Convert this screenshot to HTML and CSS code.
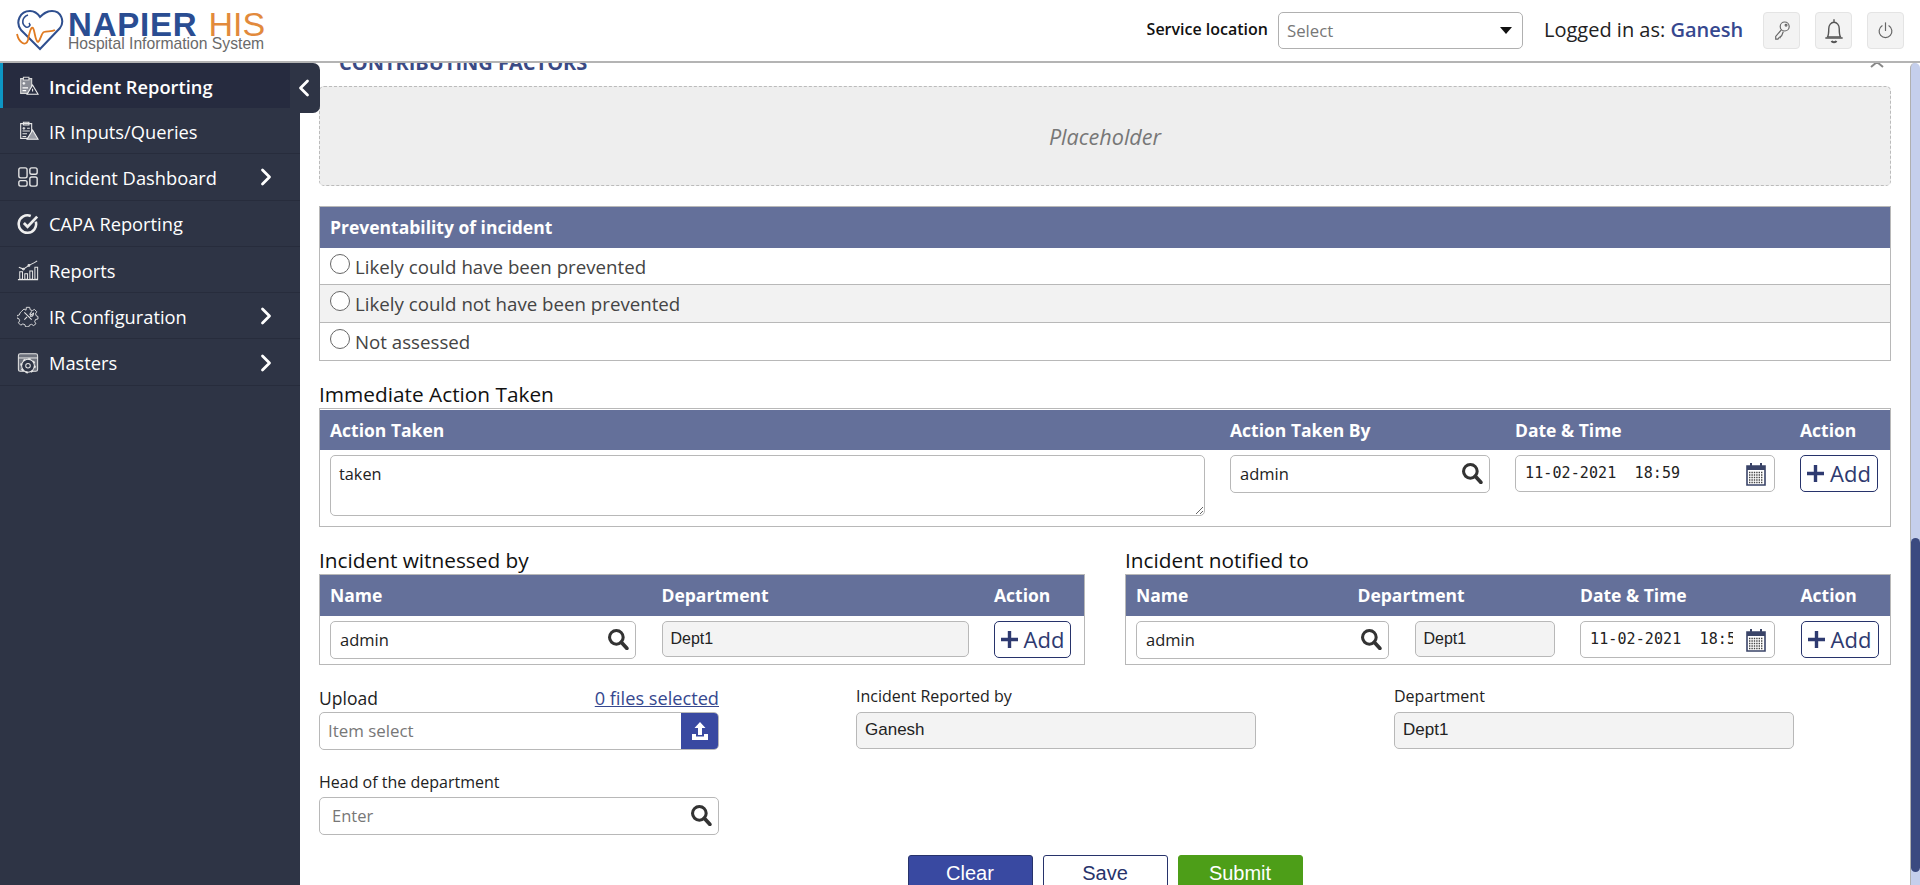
FILE: index.html
```html
<!DOCTYPE html>
<html lang="en">
<head>
    <meta charset="UTF-8">
    <meta name="viewport" content="width=device-width, initial-scale=1.0">
    <title>Napier HIS - Incident Reporting</title>
    <link rel="stylesheet" href="styles.css">
</head>
<body>

<svg class="icon-defs" width="0" height="0">
    <defs>
        <symbol id="i-search" viewBox="0 0 20 20">
            <circle cx="8.5" cy="8.5" r="6.2" fill="none" stroke="currentColor" stroke-width="2.8"/>
            <path d="M13 13l5 5.5" fill="none" stroke="currentColor" stroke-width="3.4" stroke-linecap="round"/>
        </symbol>
        <symbol id="i-plus" viewBox="0 0 18 18">
            <path d="M9 0v18M0 9h18" fill="none" stroke="currentColor" stroke-width="3.6"/>
        </symbol>
        <symbol id="i-cal" viewBox="0 0 20 24">
            <path d="M1 4h18v19H1z" fill="#fff" stroke="#3a4468" stroke-width="1.6"/>
            <path d="M1 4h18v4H1z" fill="#3a4468"/>
            <path d="M5 1v5M15 1v5" stroke="#3a4468" stroke-width="2"/>
            <path d="M3 10.5h14M3 13h14M3 15.5h14M3 18h14M3 20.5h14" stroke="#444" stroke-width="1.4" stroke-dasharray="1.4 1"/>
        </symbol>
        <symbol id="i-chev" viewBox="0 0 12 18">
            <path d="M2.5 2l7 7-7 7" fill="none" stroke="currentColor" stroke-width="2.8" stroke-linecap="round" stroke-linejoin="round"/>
        </symbol>
    </defs>
</svg>

<header class="topbar">
    <div class="logo">
        <svg class="logo-heart" viewBox="0 0 50 42" width="50" height="42">
            <path d="M24 40L5 21C-1 13 4 2 14 2c5 0 8 3 10 6 3-3 6-6 12-6 9 0 13 10 8 17L24 40z" fill="none" stroke="#2f4f8f" stroke-width="2"/>
            <path d="M12 6C6 8 5 15 10 18c3 1 5-2 3-4" fill="none" stroke="#2f4f8f" stroke-width="1.6"/>
            <path d="M1 25c2 9 9 13 11 6 1-6 3-14 5-12 2 3 2 13 5 14 3-2 3-9 6-10 4-1 8 0 11-2" fill="none" stroke="#e07b22" stroke-width="1.8"/>
        </svg>
        <div class="logo-text">
            <div class="logo-name"><b>NAPIER</b><span>HIS</span></div>
            <div class="logo-sub">Hospital Information System</div>
        </div>
    </div>
    <div class="top-right">
        <span class="service-label">Service location</span>
        <div class="select-box">
            <span>Select</span>
            <i class="caret"></i>
        </div>
        <span class="logged">Logged in as: <span class="user">Ganesh</span></span>
        <div class="icon-btns">
            <div class="icon-btn">
                <svg viewBox="0 0 20 24" width="18" height="22" fill="none" stroke="#666" stroke-width="1.3">
                    <circle cx="13" cy="7" r="5"/>
                    <circle cx="14.5" cy="5.5" r="1"/>
                    <path d="M9.5 10.5L3 18v3h2.5l1-1.5H8V18l1.5-.5 2-5"/>
                </svg>
            </div>
            <div class="icon-btn">
                <svg viewBox="0 0 20 24" width="24" height="28" fill="none" stroke="#555" stroke-width="1.2">
                    <path d="M10 2v2M4.5 17c1-2 1-4 1-7 0-3 2-5.500 4.500-5.500S14.500 7 14.500 10c0 3 0 5 1 7z"/>
                    <path d="M3 18h14" stroke-linecap="round"/>
                    <path d="M8 20.500c.5 1.500 3.500 1.500 4 0" stroke-width="1.800"/>
                </svg>
            </div>
            <div class="icon-btn">
                <svg viewBox="0 0 20 22" width="17" height="19" fill="none" stroke="#666" stroke-width="1.4" stroke-linecap="round">
                    <path d="M10 2v9"/>
                    <path d="M6 5.500a7.500 7.500 0 1 0 8 0"/>
                </svg>
            </div>
        </div>
    </div>
</header>

<div class="layout">
    <nav class="sidebar">
        <a class="nav-item active">
            <svg class="nav-icon" viewBox="0 0 24 24" fill="none" stroke="#d8d8d8" stroke-width="1.200">
                <path d="M4 4h12v16H4z" fill="#8a8d96"/>
                <path d="M7 2.500h6v3H7z" fill="#2a2f42"/>
                <path d="M6 9h3M7.500 7.500v3M6 14h6M6 17h4" stroke="#fff"/>
                <path d="M17 11l6 10H11z" fill="#2a2f42" stroke="#eee"/>
                <path d="M17 15v3" stroke="#eee"/>
            </svg>
            <span>Incident Reporting</span>
        </a>
        <a class="nav-item">
            <svg class="nav-icon" viewBox="0 0 24 24" fill="none" stroke="#e6e6e6" stroke-width="1.200">
                <path d="M4 4h12v16H4z"/>
                <path d="M7 2.500h6v3H7z"/>
                <path d="M6 9h3M7.500 7.500v3M11 9h3M6 12h8M6 15h5M6 18h4"/>
                <path d="M17 11l6 10H11z" fill="#9a9da6" stroke="#eee"/>
            </svg>
            <span>IR Inputs/Queries</span>
        </a>
        <a class="nav-item">
            <svg class="nav-icon" viewBox="0 0 24 24" fill="none" stroke="#e6e6e6" stroke-width="1.500">
                <rect x="2" y="2" width="9" height="11" rx="2"/>
                <rect x="14" y="2" width="8" height="7" rx="2"/>
                <rect x="2" y="16" width="9" height="6" rx="2"/>
                <rect x="14" y="12" width="8" height="10" rx="2"/>
            </svg>
            <span>Incident Dashboard</span>
            <svg class="nav-chev" width="12" height="18"><use href="#i-chev"/></svg>
        </a>
        <a class="nav-item">
            <svg class="nav-icon" viewBox="0 0 24 24" fill="none" stroke="#eee" stroke-width="2.800">
                <path d="M20.500 9.500A9.500 9.500 0 1 1 15 3.300"/>
                <path d="M7.500 11l4 4L22 4" stroke-width="3"/>
            </svg>
            <span>CAPA Reporting</span>
        </a>
        <a class="nav-item">
            <svg class="nav-icon" viewBox="0 0 24 24" fill="none" stroke="#e6e6e6" stroke-width="1.100">
                <path d="M1 22.500h22M3 22v-8h3v8zM8.500 22v-6h3v6zM14 22v-9h3v9zM19.500 22V9h3v13z"/>
                <path d="M2 9l5 2 6-4 6-3 3-2"/>
                <circle cx="7" cy="11" r="1"/>
                <circle cx="13" cy="7" r="1"/>
            </svg>
            <span>Reports</span>
        </a>
        <a class="nav-item">
            <svg class="nav-icon" viewBox="0 0 24 24" fill="none" stroke="#e6e6e6" stroke-width="1.100">
                <path d="M10 1.500h4l.7 3 2.600 1 2.500-1.500 2.800 2.800-1.500 2.500 1 2.600 2 .7v3l-3 .7-1 2.600 1.500 2.500-2.800 2.200-2.500-1.500-2.600 1-.7 2h-4l-.7-2.500-2.600-1-2.500 1.500-2.800-2.800 1.500-2.500-1-2.600-2.500-.7v-3l3-.7 1-2.600L4.300 6.300l2.800-2.800 2.500 1.500z" transform="translate(1.200 1.200) scale(.9)"/>
                <path d="M8 8l8 8M16 7l-2 3 1 1 3-2c0 3-2 4-4 3M8 16l3-3"/>
            </svg>
            <span>IR Configuration</span>
            <svg class="nav-chev" width="12" height="18"><use href="#i-chev"/></svg>
        </a>
        <a class="nav-item">
            <svg class="nav-icon" viewBox="0 0 24 24" fill="none" stroke="#e6e6e6" stroke-width="1.100">
                <rect x="1.500" y="2" width="21" height="19" rx="2" fill="#6d717c"/>
                <path d="M1.500 6.500h21" stroke="#e6e6e6"/>
                <circle cx="12" cy="15" r="7" fill="#2e3445"/>
                <circle cx="12" cy="15" r="7.500" stroke-width="2" stroke-dasharray="2.500 3.400"/>
                <circle cx="12" cy="15" r="2.500"/>
            </svg>
            <span>Masters</span>
            <svg class="nav-chev" width="12" height="18"><use href="#i-chev"/></svg>
        </a>
        <div class="nav-toggle">
            <svg width="12" height="18"><use href="#i-chev"/></svg>
        </div>
    </nav>

    <main class="content">
        <div class="section-title">
            <span>CONTRIBUTING FACTORS</span>
            <svg class="collapse" viewBox="0 0 14 8" width="14" height="8" fill="none" stroke="#888" stroke-width="2"><path d="M1 7l6-5 6 5"/></svg>
        </div>

        <div class="placeholder">Placeholder</div>

        <div class="tbl prevent">
            <div class="tbl-head single">Preventability of incident</div>
            <label class="radio-row"><input type="radio" name="prevent"><span>Likely could have been prevented</span></label>
            <label class="radio-row shade"><input type="radio" name="prevent"><span>Likely could not have been prevented</span></label>
            <label class="radio-row"><input type="radio" name="prevent"><span>Not assessed</span></label>
        </div>

        <h4 class="tbl-title first">Immediate Action Taken</h4>
        <div class="tbl">
            <div class="tbl-head cols-action gap-top">
                <span>Action Taken</span>
                <span>Action Taken By</span>
                <span>Date &amp; Time</span>
                <span>Action</span>
            </div>
            <div class="tbl-row cols-action tall">
                <textarea class="textarea">taken</textarea>
                <div class="field">
                    <input class="input" value="admin">
                    <svg class="field-icon"><use href="#i-search"/></svg>
                </div>
                <div class="field short">
                    <input class="input mono" value="11-02-2021  18:59">
                    <svg class="cal-icon"><use href="#i-cal"/></svg>
                </div>
                <button class="add-btn"><svg width="17" height="17"><use href="#i-plus"/></svg>Add</button>
            </div>
        </div>

        <div class="two-tables">
            <div class="half">
                <h4 class="tbl-title">Incident witnessed by</h4>
                <div class="tbl">
                    <div class="tbl-head cols-witness">
                        <span>Name</span>
                        <span>Department</span>
                        <span>Action</span>
                    </div>
                    <div class="tbl-row cols-witness">
                        <div class="field">
                            <input class="input" value="admin">
                            <svg class="field-icon"><use href="#i-search"/></svg>
                        </div>
                        <div class="readonly short">Dept1</div>
                        <button class="add-btn"><svg width="17" height="17"><use href="#i-plus"/></svg>Add</button>
                    </div>
                </div>
            </div>
            <div class="half">
                <h4 class="tbl-title">Incident notified to</h4>
                <div class="tbl">
                    <div class="tbl-head cols-notify">
                        <span>Name</span>
                        <span class="dept-head">Department</span>
                        <span>Date &amp; Time</span>
                        <span>Action</span>
                    </div>
                    <div class="tbl-row cols-notify">
                        <div class="field">
                            <input class="input" value="admin">
                            <svg class="field-icon"><use href="#i-search"/></svg>
                        </div>
                        <div class="readonly short">Dept1</div>
                        <div class="field short">
                            <input class="input mono" value="11-02-2021  18:59">
                            <svg class="cal-icon"><use href="#i-cal"/></svg>
                        </div>
                        <button class="add-btn"><svg width="17" height="17"><use href="#i-plus"/></svg>Add</button>
                    </div>
                </div>
            </div>
        </div>

        <div class="form-grid">
            <div class="form-col">
                <div class="upload-label">
                    <label>Upload</label>
                    <a href="#">0 files selected</a>
                </div>
                <div class="upload">
                    <span>Item select</span>
                    <div class="upload-btn">
                        <svg viewBox="0 0 20 20" width="20" height="20" fill="#fff">
                            <path d="M10 1l5.500 6H12v7H8V7H4.500z"/>
                            <path d="M2 13h4v2.500h8V13h4v6H2z"/>
                        </svg>
                    </div>
                </div>
            </div>
            <div class="form-col raised">
                <label>Incident Reported by</label>
                <div class="readonly arial">Ganesh</div>
            </div>
            <div class="form-col raised">
                <label>Department</label>
                <div class="readonly arial">Dept1</div>
            </div>
            <div class="form-col head-dept">
                <label>Head of the department</label>
                <div class="field">
                    <input class="input hod" placeholder="Enter">
                    <svg class="field-icon"><use href="#i-search"/></svg>
                </div>
            </div>
        </div>

        <div class="actions">
            <button class="btn btn-clear">Clear</button>
            <button class="btn btn-save">Save</button>
            <button class="btn btn-submit">Submit</button>
        </div>
    </main>

    <div class="scroll-track">
        <div class="scroll-thumb"></div>
    </div>
</div>

</body>
</html>
```

FILE: styles.css
```css
* {
    box-sizing: border-box;
}

body {
    font-family: 'Open Sans', sans-serif;
    background-color: #fff;
    color: #222;
    margin: 0;
    height: 100vh;
    display: flex;
    flex-direction: column;
    overflow: hidden;
}

.icon-defs {
    position: absolute;
}

/* top bar */
.topbar {
    height: 63px;
    flex-shrink: 0;
    display: flex;
    justify-content: space-between;
    border-bottom: 2px solid #b4b4b4;
    padding: 0 16px 0 16px;
}

.logo {
    display: flex;
    align-items: flex-start;
    padding-top: 9px;
    gap: 2px;
}

.logo-text {
    font-family: 'Liberation Sans', Arial, sans-serif;
    margin-top: 3px;
}

.logo-name {
    font-size: 34px;
    line-height: 25px;
    color: #e28a3c;
    white-space: nowrap;
    display: flex;
    align-items: baseline;
    gap: 11px;
}

.logo-name b {
    font-size: 33px;
    color: #2a4d92;
    letter-spacing: 0.8px;
}

.logo-sub {
    font-size: 15.7px;
    line-height: 14px;
    color: #6a6a6a;
    white-space: nowrap;
}

.top-right {
    display: flex;
    align-items: flex-start;
    padding-top: 12px;
}

.service-label {
    font-size: 16px;
    font-weight: 600;
    color: #111;
    line-height: 34px;
    margin-right: 10px;
}

.select-box {
    width: 245px;
    height: 37px;
    border: 1px solid #b0b0b0;
    border-radius: 5px;
    display: flex;
    align-items: center;
    justify-content: space-between;
    padding: 0 10px 0 8px;
    font-size: 16.8px;
    color: #777;
    margin-right: 21px;
}

.caret {
    border-left: 6px solid transparent;
    border-right: 6px solid transparent;
    border-top: 7px solid #111;
}

.logged {
    font-size: 20px;
    color: #222;
    line-height: 36px;
    width: 219px;
    white-space: nowrap;
}

.user {
    color: #36488f;
    font-weight: 600;
}

.icon-btns {
    display: flex;
    gap: 15px;
}

.icon-btn {
    width: 37px;
    height: 37px;
    background-color: #f3f3f3;
    border: 1px solid #e4e4e4;
    border-radius: 4px;
    display: flex;
    align-items: center;
    justify-content: center;
}

/* layout */
.layout {
    flex: 1;
    display: flex;
    min-height: 0;
}

.sidebar {
    width: 300px;
    flex-shrink: 0;
    background-color: #2e3445;
    position: relative;
}

.nav-item {
    height: 46.3px;
    display: flex;
    align-items: center;
    padding-left: 17px;
    padding-top: 1px;
    font-size: 18.3px;
    color: #fff;
    border-bottom: 1px solid #272c3c;
    position: relative;
}

.nav-item span {
    margin-left: 10px;
}

.nav-item.active {
    width: 290px;
    height: 45px;
    background-color: #262b3f;
    border-left: 3px solid #0d96c4;
    padding-left: 14px;
    font-weight: 600;
    border-bottom: none;
}

.nav-icon {
    width: 22px;
    height: 22px;
    flex-shrink: 0;
}

.nav-chev {
    position: absolute;
    left: 260px;
    color: #fff;
}

.nav-toggle {
    position: absolute;
    left: 290px;
    top: 0;
    width: 30px;
    height: 50px;
    background-color: #2e3445;
    border-radius: 0 7px 7px 0;
    display: flex;
    align-items: center;
    justify-content: center;
    color: #fff;
}

.nav-toggle svg {
    transform: scaleX(-1);
    margin-right: 2px;
}

/* main */
.content {
    flex: 1;
    min-width: 0;
    overflow: hidden;
    padding: 0 19px;
}

.section-title {
    display: flex;
    justify-content: space-between;
    height: 24px;
    margin-top: -12px;
    margin-bottom: 11px;
    padding-left: 20px;
    font-size: 20px;
    line-height: 24px;
    font-weight: 700;
    color: #3a4a85;
}

.collapse {
    margin: 9px 7px 0 0;
}

.placeholder {
    height: 100px;
    background-color: #eee;
    border: 1px dashed #bbb;
    border-radius: 5px;
    display: flex;
    align-items: center;
    justify-content: center;
    font-size: 21.6px;
    font-style: italic;
    color: #777;
}

.tbl {
    border: 1px solid #b8b8b8;
}

.prevent {
    margin-top: 20px;
}

.tbl-head {
    height: 41px;
    background-color: #64709a;
    color: #fff;
    font-size: 17.5px;
    font-weight: 700;
    display: grid;
    align-items: center;
    padding: 0 12px 1px 10px;
    white-space: nowrap;
}

.tbl-head.gap-top {
    margin-top: 1px;
    height: 40px;
    padding-bottom: 0;
}

.radio-row {
    height: 37.33px;
    display: flex;
    align-items: center;
    gap: 5px;
    padding-left: 10px;
    font-size: 18.7px;
    color: #444;
    border-bottom: 1px solid #b8b8b8;
}

.radio-row:last-child {
    border-bottom: none;
}

.radio-row.shade {
    background-color: #f2f2f2;
}

.radio-row input {
    appearance: none;
    width: 20px;
    height: 20px;
    margin: -5px 0 0 0;
    border: 1.5px solid #666;
    border-radius: 50%;
    background-color: #fff;
}

.tbl-title {
    margin: 0;
    font-size: 20.8px;
    font-weight: 500;
    line-height: 24px;
    color: #111;
}

.tbl-title.first {
    margin-top: 21px;
    margin-bottom: 2px;
}

.half .tbl-title {
    margin-top: -2px;
    margin-bottom: 2px;
}

.tbl-row {
    display: grid;
    align-items: start;
    padding: 5px 12px 5px 10px;
}

.tbl-row.tall {
    height: 76px;
}

.cols-action {
    grid-template-columns: 875px 260px 260px 78px;
    column-gap: 25px;
}

.cols-witness {
    grid-template-columns: 306px 307px 77px;
    column-gap: 25.5px;
}

.cols-notify {
    grid-template-columns: 253px 140px 195px 78px;
    column-gap: 25.5px;
}

.dept-head {
    margin-left: -57px;
}

.textarea {
    display: block;
    width: 875px;
    height: 61px;
    border: 1px solid #b8b8b8;
    border-radius: 5px;
    padding: 8px 8px;
    font-family: 'Open Sans', sans-serif;
    font-size: 16.3px;
    color: #222;
    line-height: 1.3;
    outline: none;
}

.field {
    position: relative;
    height: 38px;
}

.field.short {
    height: 37px;
}

.input {
    display: block;
    width: 100%;
    height: 100%;
    border: 1px solid #b8b8b8;
    border-radius: 5px;
    padding: 0 30px 0 9px;
    font-family: 'Open Sans', sans-serif;
    font-size: 16.5px;
    color: #222;
    outline: none;
}

.input.mono {
    font-family: 'DejaVu Sans Mono', monospace;
    font-size: 15px;
    letter-spacing: 0.1px;
    padding-right: 41px;
}

.input.hod {
    padding-left: 12px;
}

.input::placeholder {
    color: #777;
}

.field-icon {
    position: absolute;
    right: 7px;
    top: 7px;
    width: 22px;
    height: 22px;
    color: #333;
}

.cal-icon {
    position: absolute;
    right: 9px;
    top: 7px;
    width: 20px;
    height: 24px;
}

.readonly {
    height: 37px;
    border: 1px solid #b8b8b8;
    border-radius: 5px;
    background-color: #f3f3f3;
    display: flex;
    align-items: center;
    padding-left: 8px;
    font-family: 'Liberation Sans', Arial, sans-serif;
    font-size: 17px;
    color: #222;
}

.readonly.short {
    height: 36px;
    font-size: 16px;
}

.add-btn {
    height: 37px;
    padding: 0;
    background-color: #fff;
    border: 1px solid #27336b;
    border-radius: 5px;
    color: #2e3a70;
    font-family: 'Open Sans', sans-serif;
    font-size: 22px;
    display: flex;
    align-items: center;
    justify-content: center;
    gap: 6px;
}

.two-tables {
    display: flex;
    gap: 40px;
    margin-top: 23px;
}

.half {
    flex: 1;
    min-width: 0;
}

.form-grid {
    display: grid;
    grid-template-columns: 537px 538px 1fr;
    margin-top: 22px;
}

.form-col {
    width: 400px;
    font-size: 16.9px;
}

.form-col label {
    display: block;
    font-weight: 500;
    color: #222;
    line-height: 22px;
}

.form-col.raised {
    margin-top: -2px;
}

.form-col.raised label {
    font-size: 16px;
    margin-bottom: 5px;
}

.head-dept {
    grid-column: 1;
    margin-top: 21px;
}

.head-dept label {
    margin-bottom: 4px;
    font-size: 16px;
}

.upload-label {
    display: flex;
    justify-content: space-between;
    line-height: 22px;
    margin-bottom: 3px;
}

.upload-label label {
    font-size: 17.5px;
}

.upload-label a {
    color: #36488f;
    font-size: 18.2px;
}

.upload {
    height: 38px;
    border: 1px solid #b8b8b8;
    border-radius: 5px;
    display: flex;
    align-items: center;
    justify-content: space-between;
    padding-left: 8px;
    color: #777;
    overflow: hidden;
}

.upload-btn {
    width: 37px;
    height: 100%;
    background-color: #3949a1;
    display: flex;
    align-items: center;
    justify-content: center;
}

.actions {
    display: flex;
    justify-content: center;
    gap: 10px;
    margin-top: 20px;
}

.btn {
    width: 125px;
    height: 38px;
    border-radius: 3px;
    font-family: 'Liberation Sans', Arial, sans-serif;
    font-size: 20px;
    border: 1px solid #27336b;
}

.btn-clear {
    background-color: #3949a1;
    color: #fff;
}

.btn-save {
    background-color: #fff;
    color: #27336b;
}

.btn-submit {
    background-color: #4d9e18;
    border-color: #4d9e18;
    color: #fff;
}

/* scrollbar */
.scroll-track {
    width: 10px;
    flex-shrink: 0;
    background-color: #c5cfec;
    border-left: 1px solid #b0b0b0;
    border-radius: 5px 5px 0 0;
    padding-top: 475px;
}

.scroll-thumb {
    height: 334px;
    background-color: #3b4a80;
    border-radius: 5px;
}
```
